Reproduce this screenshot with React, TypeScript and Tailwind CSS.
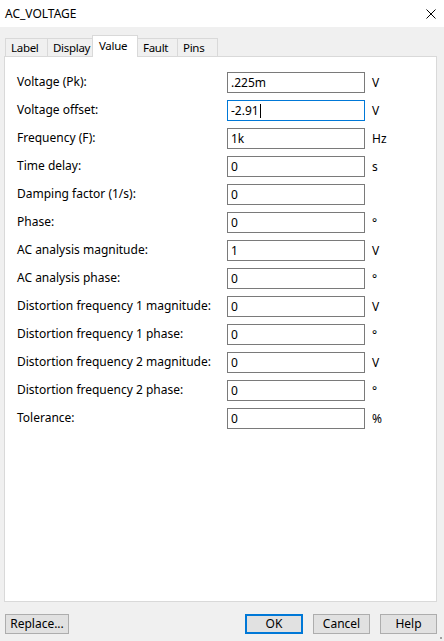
const rows: { label: string; value: string; unit: string; focused?: boolean }[] = [
  { label: "Voltage (Pk):", value: ".225m", unit: "V" },
  { label: "Voltage offset:", value: "-2.91", unit: "V", focused: true },
  { label: "Frequency (F):", value: "1k", unit: "Hz" },
  { label: "Time delay:", value: "0", unit: "s" },
  { label: "Damping factor (1/s):", value: "0", unit: "" },
  { label: "Phase:", value: "0", unit: "°" },
  { label: "AC analysis magnitude:", value: "1", unit: "V" },
  { label: "AC analysis phase:", value: "0", unit: "°" },
  { label: "Distortion frequency 1 magnitude:", value: "0", unit: "V" },
  { label: "Distortion frequency 1 phase:", value: "0", unit: "°" },
  { label: "Distortion frequency 2 magnitude:", value: "0", unit: "V" },
  { label: "Distortion frequency 2 phase:", value: "0", unit: "°" },
  { label: "Tolerance:", value: "0", unit: "%" },
];

const tabs = [
  { name: "Label", w: "w-[43px]" },
  { name: "Display", w: "w-[46px]" },
  { name: "Value", w: "w-[46px]", active: true },
  { name: "Fault", w: "w-[41px]" },
  { name: "Pins", w: "w-[41px]" },
];

export default function App() {
  return (
    <div className="w-[444px] h-[641px] bg-[#f0f0f0] text-[12px] text-black font-['Noto_Sans',sans-serif] flex flex-col overflow-hidden">
      {/* title bar */}
      <div className="h-[27px] bg-white flex items-center justify-between pl-[5px] pr-[7px]">
        <span className="text-[12px]">AC_VOLTAGE</span>
        <svg width="10" height="10" viewBox="0 0 10 10" className="mr-[1px]">
          <path d="M0.5 0.5 L9.5 9.5 M9.5 0.5 L0.5 9.5" stroke="#000" strokeWidth="1" />
        </svg>
      </div>

      {/* tabs */}
      <div className="flex items-end ml-[5px] mt-[8px] h-[21px] text-[11.5px] tracking-[-0.3px]">
        {tabs.map((t, i) =>
          t.active ? (
            <div
              key={t.name}
              className={`${t.w} -ml-px h-[22px] -mb-px relative z-10 bg-white border border-b-0 border-[#d9d9d9] pl-[6px] pt-[1px] leading-[18px]`}
            >
              {t.name}
            </div>
          ) : (
            <div
              key={t.name}
              className={`${t.w} ${i > 0 ? "-ml-px" : ""} h-[18px] border border-b-0 border-[#d9d9d9] bg-[#f0f0f0] pl-[5px] leading-[18px]`}
            >
              {t.name}
            </div>
          )
        )}
      </div>

      {/* panel */}
      <div className="ml-[4px] w-[433px] h-[546px] bg-white border border-[#d9d9d9] pt-[15px] pl-[12px] flex flex-col gap-[7px]">
        {rows.map((r) => (
          <div key={r.label} className="flex items-center h-[21px]">
            <div className="w-[210px] -mt-[2px]">{r.label}</div>
            <div
              className={`w-[138px] h-[21px] border ${
                r.focused ? "border-[#0078d7]" : "border-[#7a7a7a]"
              } flex items-center pl-[3px]`}
            >
              <span>{r.value}</span>
              {r.focused && <span className="w-px h-[14px] bg-black ml-[1px]" />}
            </div>
            <div className="ml-[7px]">{r.unit}</div>
          </div>
        ))}
      </div>

      {/* buttons */}
      <div className="flex items-center mt-[12px] px-[5px]">
        <button className="w-[64px] h-[20px] bg-[#e1e1e1] border border-[#adadad] text-[12px] leading-none">
          Replace...
        </button>
        <div className="flex-1" />
        <button className="w-[58px] h-[20px] bg-[#e1e1e1] border-2 border-[#0078d7] text-[12px] leading-none">
          OK
        </button>
        <button className="ml-[10px] w-[57px] h-[20px] bg-[#e1e1e1] border border-[#adadad] text-[12px] leading-none">
          Cancel
        </button>
        <button className="ml-[10px] w-[57px] h-[20px] bg-[#e1e1e1] border border-[#adadad] text-[12px] leading-none mr-[2px]">
          Help
        </button>
      </div>
      {/* size grip */}
      <div className="flex justify-end pr-[2px] mt-[3px]">
        <div className="w-[2px] h-[2px] bg-[#a0a0a0]" />
      </div>
    </div>
  );
}
